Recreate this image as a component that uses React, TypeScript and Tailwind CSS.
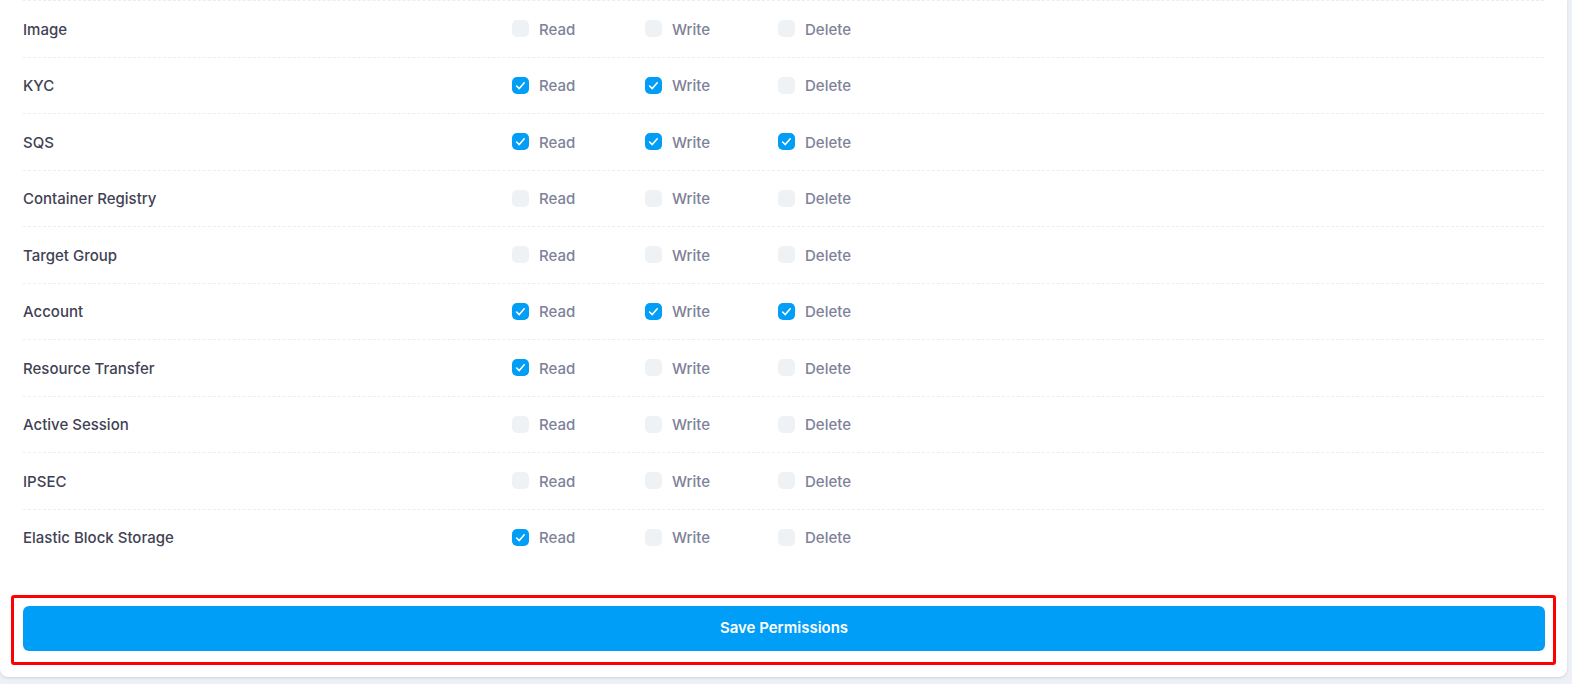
const permissions = [
  { name: 'Image', read: false, write: false, del: false },
  { name: 'KYC', read: true, write: true, del: false },
  { name: 'SQS', read: true, write: true, del: true },
  { name: 'Container Registry', read: false, write: false, del: false },
  { name: 'Target Group', read: false, write: false, del: false },
  { name: 'Account', read: true, write: true, del: true },
  { name: 'Resource Transfer', read: true, write: false, del: false },
  { name: 'Active Session', read: false, write: false, del: false },
  { name: 'IPSEC', read: false, write: false, del: false },
  { name: 'Elastic Block Storage', read: true, write: false, del: false },
];

function Check({ checked, label }: { checked: boolean; label: string }) {
  return (
    <label className="flex items-center gap-[10px] w-[133px] shrink-0">
      <span
        className={
          checked
            ? 'flex items-center justify-center w-[17px] h-[17px] rounded-[5px] bg-[#009ef7]'
            : 'flex items-center justify-center w-[17px] h-[17px] rounded-[5px] bg-[#eff2f5]'
        }
      >
        {checked && (
          <svg width="17" height="17" viewBox="0 0 17 17" fill="none">
            <path
              d="M4.6 9 L7.3 11.6 L12.2 5.8"
              stroke="white"
              strokeWidth="1.6"
              strokeLinecap="round"
              strokeLinejoin="round"
            />
          </svg>
        )}
      </span>
      <span className="pt-[2px] text-[15px] font-medium text-[#7e8299]">{label}</span>
    </label>
  );
}

export default function App() {
  return (
    <div className="h-screen bg-[#eef0f8] overflow-hidden" style={{ fontFamily: 'Inter, "Open Sans", sans-serif' }}>
      <div className="w-[1567px] bg-white rounded-b-lg shadow-sm px-[11px] pb-[12px]">
        <div className="px-[12px]">
          {permissions.map((p) => (
            <div
              key={p.name}
              className="flex items-center h-[56.5px] border-t border-dashed border-[#eaedf2]"
            >
              <div className="w-[489px] shrink-0 pt-[2px] text-[15px] font-medium text-[#3f4254]">{p.name}</div>
              <Check checked={p.read} label="Read" />
              <Check checked={p.write} label="Write" />
              <Check checked={p.del} label="Delete" />
            </div>
          ))}
        </div>
        <div className="mt-[30px] border-[3px] border-[#ff0000] rounded-[3px] pl-[9px] pr-[8px] pt-[8px] pb-[11px]">
          <button className="w-full h-[45px] rounded-[6px] bg-[#009ef7] text-white text-[15px] font-semibold">
            Save Permissions
          </button>
        </div>
      </div>
    </div>
  );
}
